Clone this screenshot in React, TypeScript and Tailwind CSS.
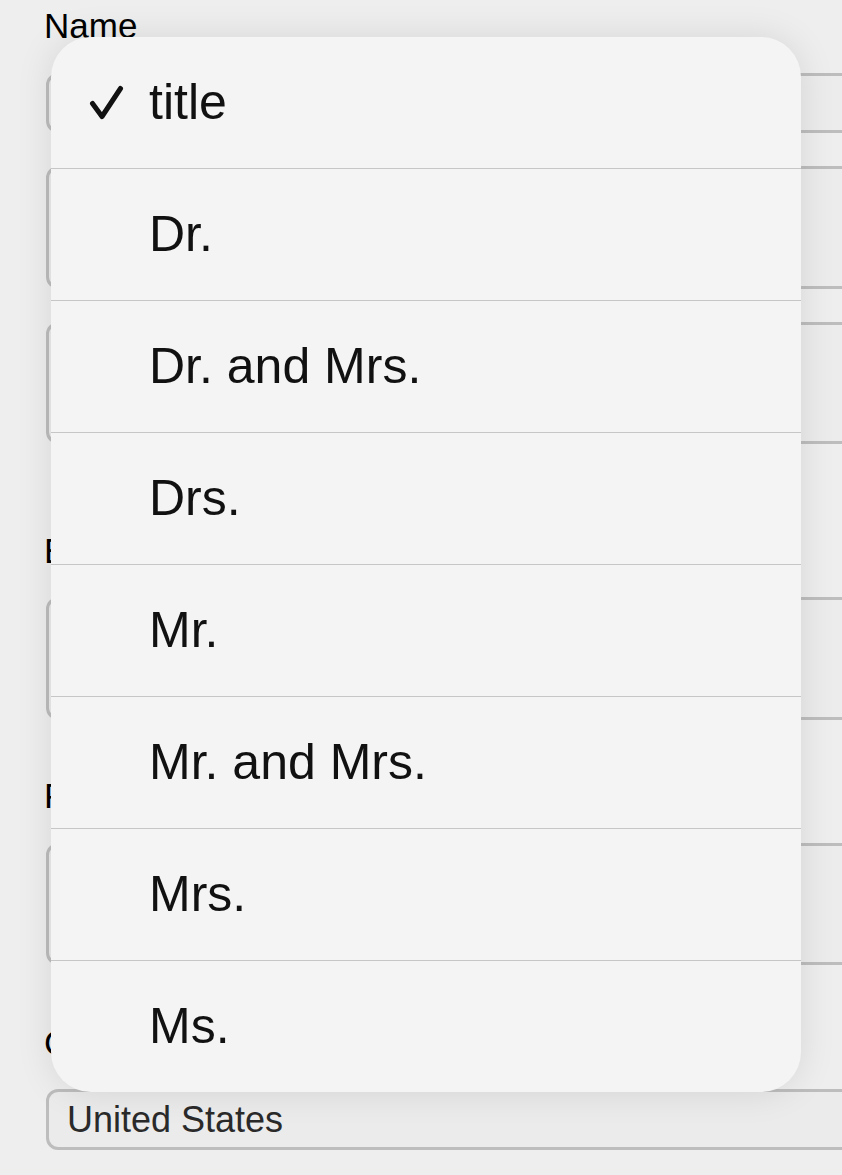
import React from 'react';

const titles = ['title', 'Dr.', 'Dr. and Mrs.', 'Drs.', 'Mr.', 'Mr. and Mrs.', 'Mrs.', 'Ms.'];

function Check() {
  return (
    <svg width="37" height="36" viewBox="0 0 37 36" fill="none">
      <path
        d="M4.5 18.5 L14 31.5 L32.5 3.5"
        stroke="#111"
        strokeWidth="5"
        strokeLinecap="round"
        strokeLinejoin="round"
      />
    </svg>
  );
}

function Label({ text, className = '' }: { text: string; className?: string }) {
  return <div className={`text-[35px] leading-[40px] text-black ${className}`}>{text}</div>;
}

function Field({ className = '' }: { className?: string }) {
  return (
    <div
      className={`ml-[2px] w-[900px] rounded-[12px] border-[3px] border-[#bdbdbd] bg-[#ececec] ${className}`}
    />
  );
}

export default function App() {
  const selected = 'title';

  return (
    <div className="relative min-h-[1175px] overflow-hidden bg-[#eeeeee] font-['Liberation_Sans',Arial,sans-serif]">
      {/* background form */}
      <div className="pl-[44px] pt-[6px]">
        <Label text="Name" />
        <Field className="mt-[27px] h-[60px]" />
        <Field className="mt-[33px] h-[123px]" />
        <Field className="mt-[33px] h-[122px]" />

        <Label text="Email" className="mt-[87px]" />
        <Field className="mt-[26px] h-[123px]" />

        <Label text="Phone" className="mt-[56px]" />
        <Field className="mt-[27px] h-[122px]" />

        <Label text="Country" className="mt-[58px]" />
        <div className="ml-[2px] mt-[26px] flex h-[61px] w-[900px] items-center rounded-[12px] border-[3px] border-[#bdbdbd] bg-[#ebebeb] pl-[18px] text-[36px] text-[#2a2a2a]">
          United States
        </div>
      </div>

      {/* title picker menu */}
      <div className="absolute left-[51px] top-[37px] w-[750px] overflow-hidden rounded-[40px] bg-[#f4f4f4] shadow-[0_0_36px_rgba(0,0,0,0.10)]">
        {titles.map((t, i) => (
          <div
            key={t}
            className={`flex items-center text-[50px] text-[#111] ${
              i === 0 ? 'h-[131px]' : 'h-[132px] border-t border-[#c6c6c6]'
            }`}
          >
            <span className="flex w-[98px] shrink-0 pl-[37px]">{t === selected && <Check />}</span>
            <span>{t}</span>
          </div>
        ))}
      </div>
    </div>
  );
}
